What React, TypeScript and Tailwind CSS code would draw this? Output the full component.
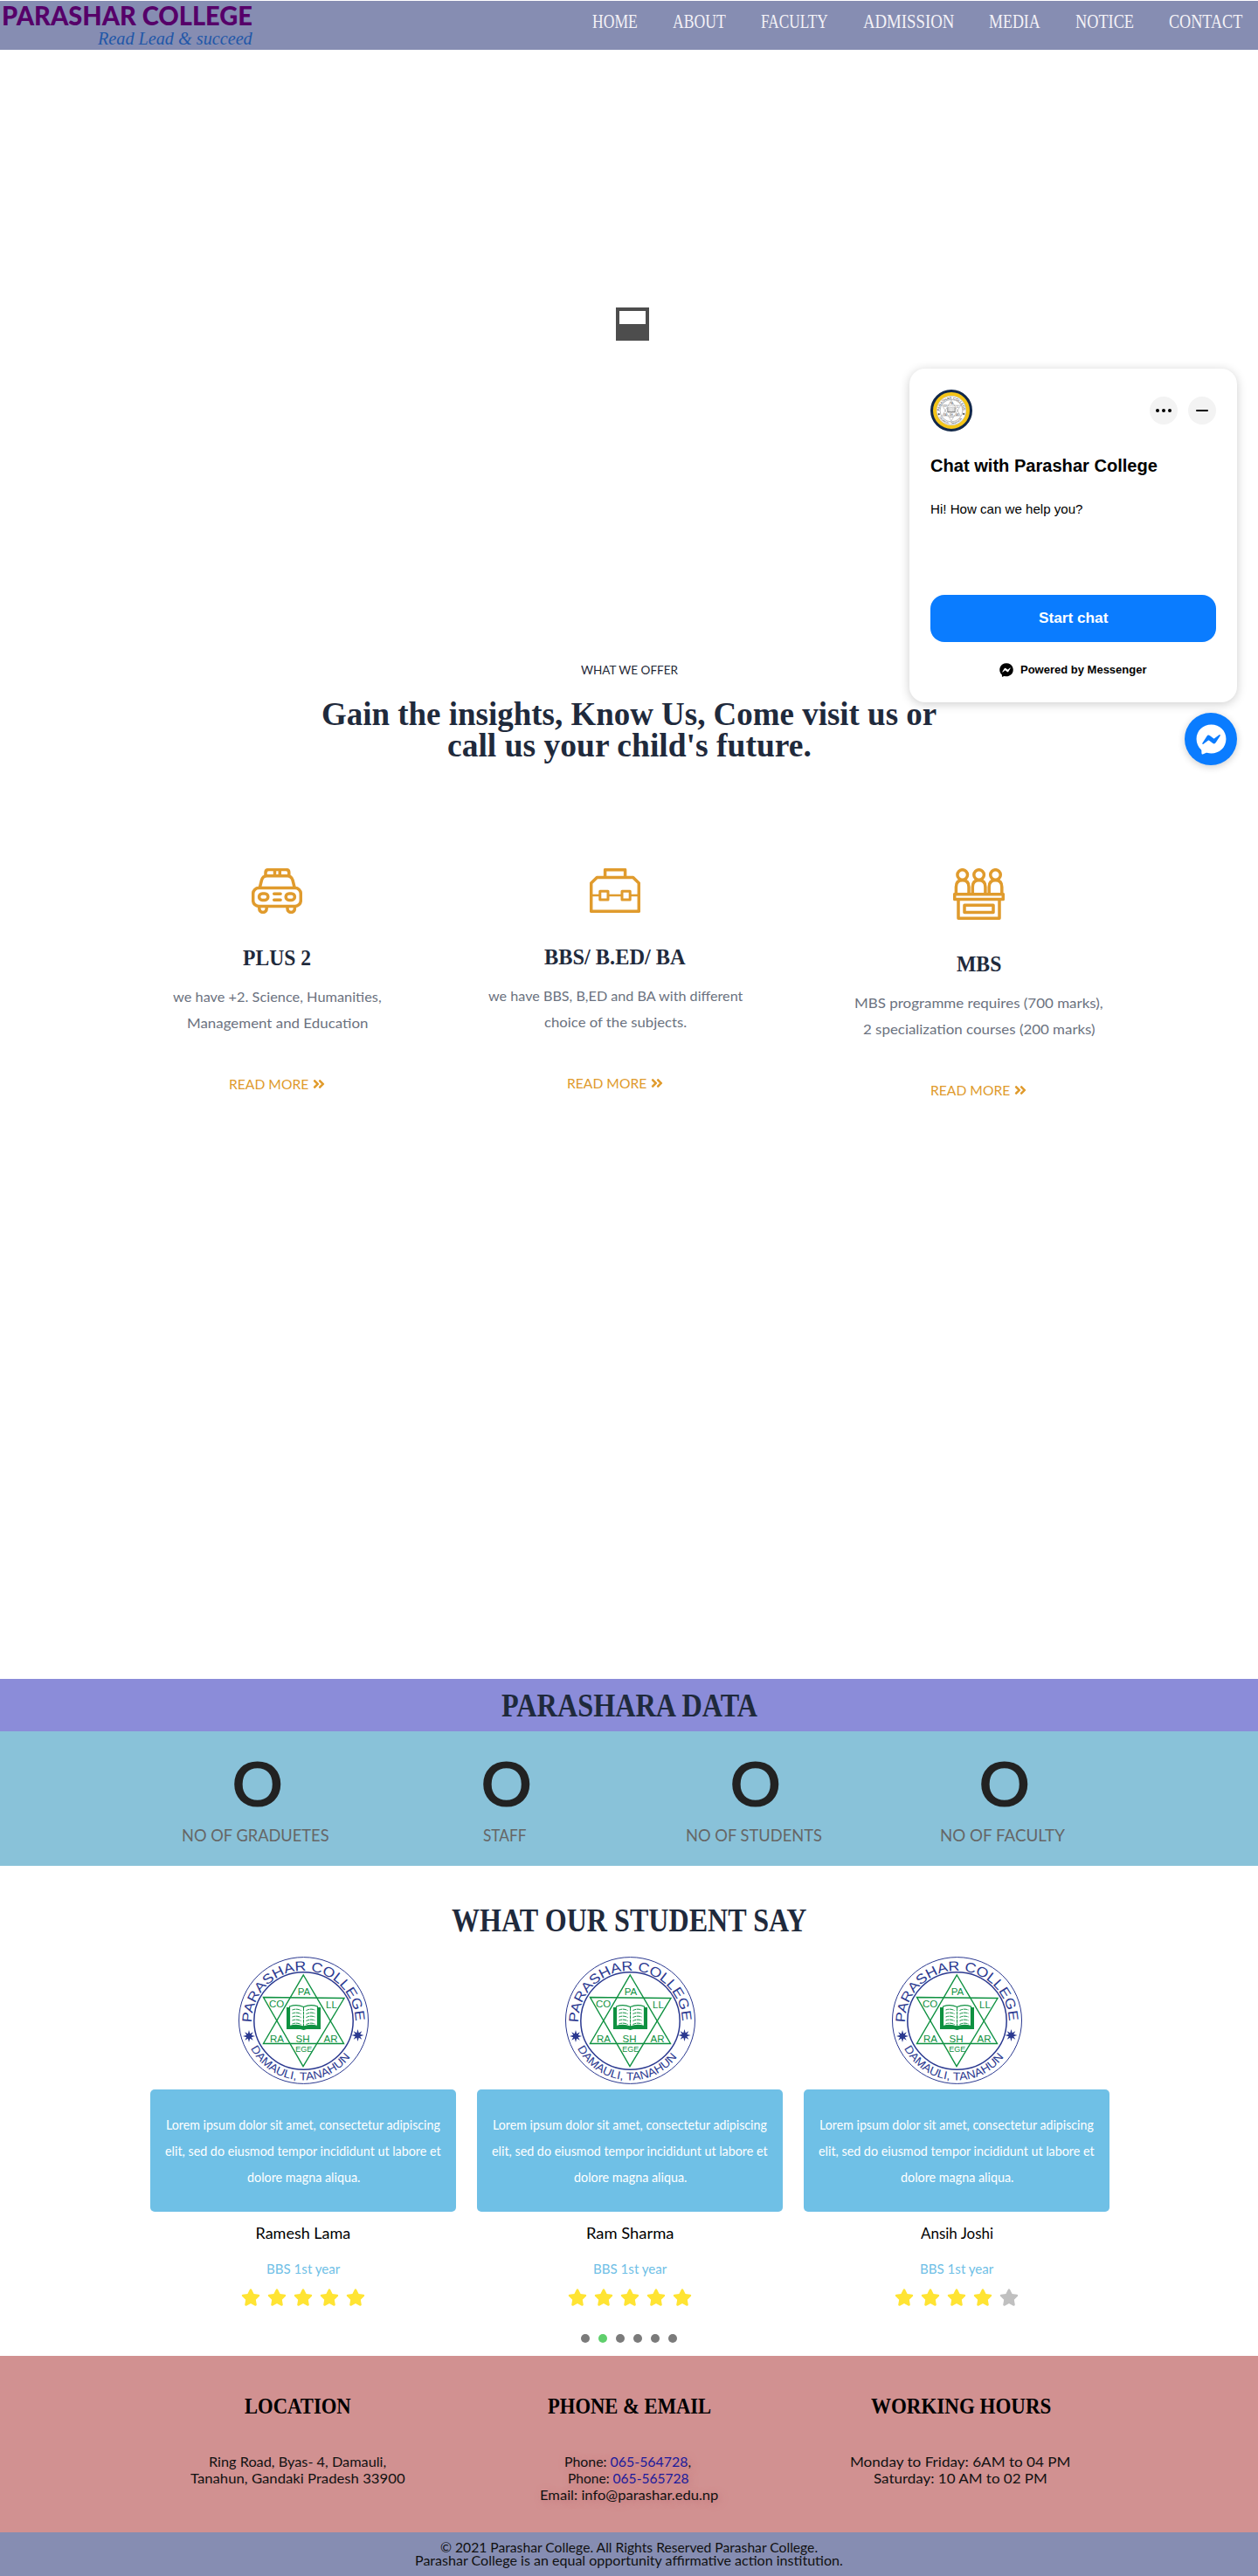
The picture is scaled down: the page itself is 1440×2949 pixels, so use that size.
import { useLayoutEffect, useRef, useState, useId } from "react";
import type { ReactNode } from "react";
import { FaAngleDoubleRight, FaFacebookMessenger, FaStar } from "react-icons/fa";

/* A single line of text, condensed or widened to a given width. */
function Fit({ w, children, className = "" }: { w: number; children: ReactNode; className?: string }) {
  const ref = useRef<HTMLSpanElement>(null);
  const [scale, setScale] = useState(1);
  useLayoutEffect(() => {
    if (ref.current) setScale(w / ref.current.offsetWidth);
  }, [w]);
  return (
    <span className={`inline-block whitespace-nowrap text-left ${className}`} style={{ width: w }}>
      <span ref={ref} className="inline-block origin-left" style={{ transform: `scaleX(${scale})` }}>
        {children}
      </span>
    </span>
  );
}

function Seal({ ring = "#2b3990", star = "#0f9141", className = "" }: { ring?: string; star?: string; className?: string }) {
  const id = useId();
  const spark = "M0-7 1.200-2.800 4.800-4.800 2.800-1.200 7 0 2.800 1.200 4.800 4.800 1.200 2.800 0 7-1.200 2.800-4.800 4.800-2.800 1.200-7 0-2.800-1.200-4.800-4.800-1.200-2.800Z";
  return (
    <svg viewBox="0 0 149 146" className={className} fontFamily="Liberation Sans, sans-serif">
      <defs>
        <path id={`${id}t`} d="M15 75.500A59.500 59.500 0 0 1 134 75.500" />
        <path id={`${id}b`} d="M14 105A68 68 0 0 0 131 111" />
      </defs>
      <g fill="none" stroke={ring}>
        <ellipse cx="74.500" cy="73" rx="74" ry="72.400" strokeWidth="1" />
        <ellipse cx="74.500" cy="73.500" rx="56.700" ry="55.800" strokeWidth="1.500" />
      </g>
      <g fill={ring}>
        <text fontSize="15.500">
          <textPath href={`#${id}t`} textLength="185" lengthAdjust="spacingAndGlyphs">PARASHAR COLLEGE</textPath>
        </text>
        <text fontSize="13">
          <textPath href={`#${id}b`} textLength="136" lengthAdjust="spacingAndGlyphs">DAMAULI, TANAHUN</textPath>
        </text>
        <path d={spark} transform="translate(12 91)" />
        <path d={spark} transform="translate(136.500 90)" />
      </g>
      <g fill="none" stroke={star} strokeWidth="1.400">
        <path d="M74.300 21 120.500 99.500H28.500Z" />
        <path d="M28.500 46.500 121 47.500 74 125.500Z" />
      </g>
      <g fill={star} fontSize="11.500" textAnchor="middle">
        <text x="75" y="43.500">PA</text>
        <text x="43.500" y="57.500">CO</text>
        <text x="106.500" y="58.500">LL</text>
        <text x="44" y="97.500">RA</text>
        <text x="73.500" y="97.500">SH</text>
        <text x="105.500" y="97.500">AR</text>
        <text x="74.700" y="109" fontSize="9">EGE</text>
      </g>
      <path d="M55 58h4v20.500h31V58h4v25H78l-3.500 1-3.500-1H55Z" fill={star} />
      <path
        d="M58.500 57q8-3 16 .5 8-3.500 16-.5v22.500q-8-2.500-16 .5-8-3-16-.5Z"
        fill="white"
        stroke={star}
        strokeWidth="1.200"
      />
      <path
        d="M74.500 58v22M61.500 61q5-2 10 .5M61.500 65q5-2 10 .5M61.500 69q5-2 10 .5M61.500 73q5-2 10 .5M61.500 77q5-2 10 .5M77.500 61.500q5-2.500 10-.5M77.500 65.500q5-2.500 10-.5M77.500 69.500q5-2.500 10-.5M77.500 73.500q5-2.500 10-.5M77.500 77.500q5-2.500 10-.5"
        fill="none"
        stroke={star}
        strokeWidth="1"
        strokeDasharray="4 .6"
      />
    </svg>
  );
}

const iconStroke = { fill: "none", stroke: "#e09b2d", strokeWidth: 3.5, strokeLinejoin: "round" as const, strokeLinecap: "round" as const };

const TaxiIcon = () => (
  <svg width="58" height="52" viewBox="0 0 58 52" {...iconStroke}>
    <path d="M16 8.500V5q0-3.400 3.500-3.400h20Q42.800 1.600 42.800 5v3.500M26.500 2v6M32.300 2v6" />
    <path d="M9.500 21.500 11.500 13.500Q12.800 8.700 17.500 8.700H41Q45.500 8.700 47 13.500L49 21.500" />
    <rect x="1.700" y="22.500" width="54.600" height="21" rx="6.500" />
    <rect x="8.600" y="29" width="10.200" height="7.400" rx="3.700" />
    <rect x="39.200" y="29" width="10.200" height="7.400" rx="3.700" />
    <path d="M25.700 29.300h7.400M25.700 36.300h7.400M8.800 44.500v1.700a4.200 4.200 0 0 0 8.400 0v-1.700M41 44.500v1.700a4.200 4.200 0 0 0 8.400 0v-1.700" />
  </svg>
);

const BriefcaseIcon = () => (
  <svg width="58" height="52" viewBox="0 0 58 52" {...iconStroke}>
    <path d="M1.700 49.300V17L8.300 10.600H49.700L56.300 17V49.300ZM17.600 10V1.700H40.600V10" />
    <path d="M2 31H11M22 31H36M47 31H56" strokeWidth="2.400" />
    <rect x="11.800" y="26.300" width="9.200" height="9.800" strokeWidth="3" />
    <rect x="37" y="26.300" width="9.200" height="9.800" strokeWidth="3" />
  </svg>
);

const PanelIcon = () => (
  <svg width="59" height="59" viewBox="0 0 59 59" {...iconStroke}>
    {[10.7, 29.6, 48.5].map((x) => (
      <g key={x} transform={`translate(${x} 0)`}>
        <circle cx="0" cy="7.500" r="5.800" />
        <path d="M-7.300 28.500V21.500Q-7.300 13.800 0 13.800 7.300 13.800 7.300 21.500V28.500" />
      </g>
    ))}
    <rect x="1.700" y="29.800" width="55.600" height="5.700" />
    <path d="M6 36V57.200H53V36" />
    <rect x="13" y="42.300" width="33" height="8.300" />
  </svg>
);

const nav: [string, number][] = [
  ["HOME", 52], ["ABOUT", 61], ["FACULTY", 77], ["ADMISSION", 104], ["MEDIA", 59], ["NOTICE", 67], ["CONTACT", 84],
];

function Header() {
  return (
    <header className="mt-px flex h-14 justify-between bg-[#868db2]">
      <div className="flex flex-col items-end pl-0.5">
        <div className="h-8 font-['Lato'] text-[30px] font-black leading-8 text-[#560069]">
          <Fit w={287}>PARASHAR COLLEGE</Fit>
        </div>
        <div className="h-6 font-['Liberation_Serif'] text-[21px] italic leading-[22px] text-[#2257a8]">
          <Fit w={177}>Read Lead &amp; succeed</Fit>
        </div>
      </div>
      <nav className="flex gap-10 pr-[18px] pt-2 font-['Liberation_Serif'] text-2xl leading-[30px] text-[#f4f2f7]">
        {nav.map(([label, w]) => (
          <a key={label}><Fit w={w}>{label}</Fit></a>
        ))}
      </nav>
    </header>
  );
}

const services: { icon: ReactNode; top: string; title: [string, number]; lines: [string, number][] }[] = [
  { icon: <TaxiIcon />, top: "h-[88px]", title: ["PLUS 2", 78], lines: [["we have +2. Science, Humanities,", 239], ["Management and Education", 207]] },
  { icon: <BriefcaseIcon />, top: "h-[87px]", title: ["BBS/ B.ED/ BA", 162], lines: [["we have BBS, B,ED and BA with different", 291], ["choice of the subjects.", 163]] },
  { icon: <PanelIcon />, top: "h-[95px]", title: ["MBS", 51], lines: [["MBS programme requires (700 marks),", 285], ["2 specialization courses (200 marks)", 266]] },
];

function Services() {
  return (
    <section className="h-[1170px] pt-1.5 text-center">
      <p className="font-['Lato'] text-sm leading-[18px] text-[#1f2937]"><Fit w={111}>WHAT WE OFFER</Fit></p>
      <h2 className="mt-6 font-['Liberation_Serif'] text-[37px] font-bold leading-9 text-[#1f2a3c]">
        <div><Fit w={704}>Gain the insights, Know Us, Come visit us or</Fit></div>
        <div><Fit w={417}>call us your child's future.</Fit></div>
      </h2>
      <div className="ml-[142px] mt-[122px] flex">
        {services.map((s, i) => (
          <div key={i} className={["w-[350px]", "w-[424px]", "w-[409px]"][i]}>
            <div className={`flex justify-center ${s.top}`}>{s.icon}</div>
            <h3 className="font-['Liberation_Serif'] text-[26px] font-bold leading-[30px] text-[#1f2a3c]"><Fit w={s.title[1]}>{s.title[0]}</Fit></h3>
            <div className="mt-3.5 font-['Lato'] text-base leading-[30px] text-[#6b7280]">
              {s.lines.map(([t, w]) => <div key={t}><Fit w={w}>{t}</Fit></div>)}
            </div>
            <a className="mt-10 flex items-center justify-center gap-1 font-['Lato'] text-base leading-[30px] text-[#e09b2d]">
              <Fit w={91}>READ MORE</Fit>
              <FaAngleDoubleRight size={16} />
            </a>
          </div>
        ))}
      </div>
    </section>
  );
}

const stats: [string, number][] = [["NO OF GRADUETES", 169], ["STAFF", 50], ["NO OF STUDENTS", 156], ["NO OF FACULTY", 143]];

function Stats() {
  return (
    <section className="text-center">
      <h2 className="h-[60px] bg-[#8b8cd9] pt-[13px] font-['Liberation_Serif'] text-[37px] font-bold leading-9 text-[#1f2a3c]">
        <Fit w={293}>PARASHARA DATA</Fit>
      </h2>
      <div className="flex h-[154px] bg-[#89c2d9] px-[150px]">
        {stats.map(([label, w]) => (
          <div key={label} className="w-[285px]">
            <div className="pl-1 pt-[27px] font-['Lato'] text-[68px] leading-[64px] text-[#222] [-webkit-text-stroke:2.2px_#222]"><Fit w={57}>O</Fit></div>
            <div className="mt-[13px] font-['Lato'] text-[19px] leading-[30px] text-[#666]"><Fit w={w}>{label}</Fit></div>
          </div>
        ))}
      </div>
    </section>
  );
}

const students: [string, number, number][] = [["Ramesh Lama", 109, 5], ["Ram Sharma", 100, 5], ["Ansih Joshi", 83, 4]];

function Testimonials() {
  return (
    <section className="h-[561px] pt-[45px] text-center">
      <h2 className="font-['Liberation_Serif'] text-[37px] font-bold leading-9 text-[#1f2a3c]"><Fit w={406}>WHAT OUR STUDENT SAY</Fit></h2>
      <div className="ml-[172px] mt-[23px] flex w-[1098px] gap-6">
        {students.map(([name, w, stars]) => (
          <article key={name} className="w-[350px]">
            <Seal className="mx-auto h-[146px] w-[149px]" />
            <div className="mt-1.5 h-[140px] rounded-[5px] bg-[#6fc0e6] pt-[25px] font-['Lato'] text-[15px] leading-[30px] text-white">
              <div><Fit w={314}>Lorem ipsum dolor sit amet, consectetur adipiscing</Fit></div>
              <div><Fit w={316}>elit, sed do eiusmod tempor incididunt ut labore et</Fit></div>
              <div><Fit w={129}>dolore magna aliqua.</Fit></div>
            </div>
            <h4 className="mt-[9px] font-['Lato'] text-lg leading-[30px] text-black"><Fit w={w}>{name}</Fit></h4>
            <p className="mt-[11px] font-['Lato'] text-base leading-[30px] text-[#6fc0e6]"><Fit w={84}>BBS 1st year</Fit></p>
            <div className="mt-[7px] flex justify-center gap-2">
              {[0, 1, 2, 3, 4].map((n) => (
                <FaStar key={n} size={22} className={n < stars ? "text-[#ffe433]" : "text-[#c0c0c0]"} />
              ))}
            </div>
          </article>
        ))}
      </div>
      <div className="mt-[31px] flex justify-center gap-2.5">
        {[0, 1, 2, 3, 4, 5].map((n) => (
          <span key={n} className={`size-2.5 rounded-full ${n === 1 ? "bg-[#5fcf6c]" : "bg-[#7b7b7b]"}`} />
        ))}
      </div>
    </section>
  );
}

function Footer() {
  return (
    <footer className="text-center">
      <div className="flex h-[202px] bg-[#d19191] pt-[43px] font-['Lato'] text-[15px] leading-[19px] text-[#111]">
        <div className="ml-[151px] w-[379px]">
          <h3 className="mb-[39px] font-['Liberation_Serif'] text-[26px] font-bold leading-[30px] text-black"><Fit w={122}>LOCATION</Fit></h3>
          <div><Fit w={203}>Ring Road, Byas- 4, Damauli,</Fit></div>
          <div><Fit w={246}>Tanahun, Gandaki Pradesh 33900</Fit></div>
        </div>
        <div className="w-[380px]">
          <h3 className="mb-[39px] font-['Liberation_Serif'] text-[26px] font-bold leading-[30px] text-black"><Fit w={187}>PHONE &amp; EMAIL</Fit></h3>
          <div className="[text-shadow:2px_2px_8px_#c0757a]">
            <div className="pr-1"><Fit w={145}>Phone: <span className="text-[#1a1a9c]">065-564728</span>,</Fit></div>
            <div className="pr-0.5"><Fit w={139}>Phone: <span className="text-[#1a1a9c]">065-565728</span></Fit></div>
            <div><Fit w={204}>Email: info@parashar.edu.np</Fit></div>
          </div>
        </div>
        <div className="w-[379px]">
          <h3 className="mb-[39px] font-['Liberation_Serif'] text-[26px] font-bold leading-[30px] text-black"><Fit w={206}>WORKING HOURS</Fit></h3>
          <div><Fit w={253}>Monday to Friday: 6AM to 04 PM</Fit></div>
          <div><Fit w={199}>Saturday: 10 AM to 02 PM</Fit></div>
        </div>
      </div>
      <div className="h-[50px] bg-[#868db2] pt-[10px] font-['Lato'] text-[15px] leading-[15px] text-[#111]">
        <div><Fit w={432}>© 2021 Parashar College. All Rights Reserved Parashar College.</Fit></div>
        <div><Fit w={490}>Parashar College is an equal opportunity affirmative action institution.</Fit></div>
      </div>
    </footer>
  );
}

function Chat() {
  return (
    <aside className="absolute left-[1041px] top-[422px] flex w-[375px] flex-col items-end font-['Liberation_Sans']">
      <div className="h-[382px] w-full rounded-[18px] bg-white px-6 pt-6 shadow-[0_2px_12px_rgba(0,0,0,0.2)]">
        <div className="flex items-center justify-between">
          <div className="flex size-12 items-center justify-center rounded-full border-[3px] border-[#12284a] bg-[#f5c518]">
            <div className="size-[34px] rounded-full bg-white"><Seal ring="#333" star="#555" className="size-[34px]" /></div>
          </div>
          <div className="flex gap-3">
            <span className="flex size-8 items-center justify-center gap-[3px] rounded-full bg-[#f3f3f3]">
              <i className="size-1 rounded-full bg-black" /><i className="size-1 rounded-full bg-black" /><i className="size-1 rounded-full bg-black" />
            </span>
            <span className="flex size-8 items-center justify-center rounded-full bg-[#f3f3f3]"><i className="h-0.5 w-3.5 rounded bg-black" /></span>
          </div>
        </div>
        <h2 className="mt-[27px] text-xl font-bold leading-6 text-black"><Fit w={260}>Chat with Parashar College</Fit></h2>
        <p className="mt-[28px] text-[15px] leading-5 text-black"><Fit w={174}>Hi! How can we help you?</Fit></p>
        <button className="mt-[88px] block h-[54px] w-full rounded-2xl bg-[#0a7cff] text-[17px] font-bold leading-[54px] text-white"><Fit w={79}>Start chat</Fit></button>
        <div className="mt-[23px] flex items-center justify-center gap-2 text-[13px] font-bold leading-[18px] text-black">
          <FaFacebookMessenger size={16} /><Fit w={145}>Powered by Messenger</Fit>
        </div>
      </div>
      <div className="mt-3 flex size-[60px] items-center justify-center rounded-full bg-[#0a7cff] text-white shadow-[0_2px_8px_rgba(0,0,0,0.2)]">
        <FaFacebookMessenger size={35} />
      </div>
    </aside>
  );
}

export default function App() {
  return (
    <div className="relative flow-root h-[2949px] w-[1440px] overflow-hidden bg-white">
      <Header />
      <section className="h-[695px] pl-[705px] pt-[295px]">
        <div className="flex size-[38px] flex-col justify-end border-4 border-[#4d4d4d]"><div className="h-[15px] bg-[#4d4d4d]" /></div>
      </section>
      <Services />
      <Stats />
      <Testimonials />
      <Footer />
      <Chat />
    </div>
  );
}
